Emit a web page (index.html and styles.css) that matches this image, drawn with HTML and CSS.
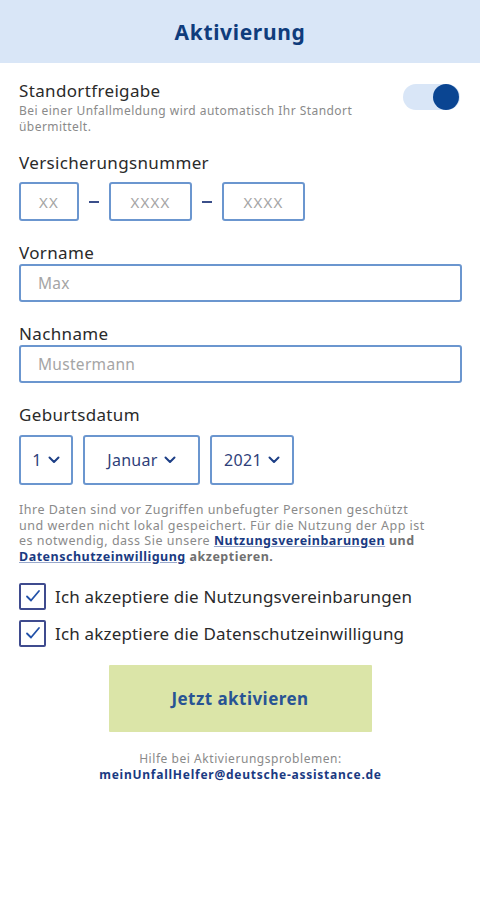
FILE: index.html
```html
<!DOCTYPE html>
<html lang="de">
<head>
<meta charset="utf-8">
<title>Aktivierung</title>
<link rel="stylesheet" href="styles.css">
</head>
<body>
<header class="appbar"><h1 class="appbar-title">Aktivierung</h1></header>
<main class="content">
  <section class="toggle-row">
    <div class="toggle-text">
      <div class="label">Standortfreigabe</div>
      <div class="hint">Bei einer Unfallmeldung wird automatisch Ihr Standort<br>übermittelt.</div>
    </div>
    <div class="switch"><span class="knob"></span></div>
  </section>

  <section class="field field-vn">
    <div class="label">Versicherungsnummer</div>
    <div class="vn-row">
      <div class="box box-xx">XX</div>
      <span class="dash"></span>
      <div class="box box-xxxx">XXXX</div>
      <span class="dash"></span>
      <div class="box box-xxxx">XXXX</div>
    </div>
  </section>

  <section class="field">
    <div class="label">Vorname</div>
    <div class="input">Max</div>
  </section>

  <section class="field">
    <div class="label">Nachname</div>
    <div class="input">Mustermann</div>
  </section>

  <section class="field">
    <div class="label">Geburtsdatum</div>
    <div class="date-row">
      <div class="select sel-day">1<svg class="chev" viewBox="0 0 12 8"><path d="M1.5 1.5 6 6l4.5-4.5"/></svg></div>
      <div class="select sel-month">Januar<svg class="chev" viewBox="0 0 12 8"><path d="M1.5 1.5 6 6l4.5-4.5"/></svg></div>
      <div class="select sel-year">2021<svg class="chev" viewBox="0 0 12 8"><path d="M1.5 1.5 6 6l4.5-4.5"/></svg></div>
    </div>
  </section>

  <p class="info">Ihre Daten sind vor Zugriffen unbefugter Personen geschützt<br>und werden nicht lokal gespeichert. Für die Nutzung der App ist<br>es notwendig, dass Sie unsere <a class="link">Nutzungsvereinbarungen</a> <b>und</b><br><a class="link">Datenschutzeinwilligung</a> <b>akzeptieren.</b></p>

  <div class="checks">
    <div class="check"><span class="cbox"><svg viewBox="0 0 20 20"><path d="M4 10.5 8 14.5 16 5"/></svg></span><span class="check-label">Ich akzeptiere die Nutzungsvereinbarungen</span></div>
    <div class="check"><span class="cbox"><svg viewBox="0 0 20 20"><path d="M4 10.5 8 14.5 16 5"/></svg></span><span class="check-label">Ich akzeptiere die Datenschutzeinwilligung</span></div>
  </div>

  <div class="btn-wrap"><button class="btn">Jetzt aktivieren</button></div>

  <div class="help">
    <div class="help-line">Hilfe bei Aktivierungsproblemen:</div>
    <div class="help-mail">meinUnfallHelfer@deutsche-assistance.de</div>
  </div>
</main>
</body>
</html>
```
FILE: styles.css
```css
* { box-sizing: border-box; }
html, body { margin: 0; padding: 0; background: #fff; }
body { font-family: "Noto Sans", "Open Sans", sans-serif; color: #222; width: 480px; }

.appbar { height: 63px; background: #d9e6f7; display: flex; align-items: center; justify-content: center; }
.appbar-title { margin: 0; font-size: 21px; font-weight: 700; color: #0f3c7c; letter-spacing: 0.65px; }

.content { padding: 18px 18px 0 19px; }

.label { font-size: 17px; line-height: 20px; color: #2a2a2a; letter-spacing: 0.35px; }

.toggle-row { display: flex; justify-content: space-between; align-items: flex-start; }
.hint { font-size: 12px; line-height: 15.5px; color: #8a8a8a; margin-top: 2px; letter-spacing: 0.45px; white-space: nowrap; }
.switch { width: 57px; height: 26px; border-radius: 13px; background: #d9e6f7; margin-top: 3px; margin-right: 2px; display: flex; align-items: center; justify-content: flex-end; padding-right: 1px; }
.knob { width: 26px; height: 26px; border-radius: 50%; background: #0a4592; }

.field { margin-top: 22px; }
.field-vn { margin-top: 19px; }

.vn-row { display: flex; align-items: center; margin-top: 9px; }
.box { height: 39px; border: 2px solid #6b96cf; border-radius: 3px; display: flex; align-items: center; justify-content: center; font-size: 15px; color: #a5a5a5; letter-spacing: 1.2px; }
.box-xx { width: 60px; }
.box-xxxx { width: 83px; }
.dash { width: 10px; height: 2px; background: #3b4f8a; margin: 0 10px; }

.input { height: 38px; border: 2px solid #6b96cf; border-radius: 3px; margin-top: 1px; display: flex; align-items: center; padding-left: 17px; font-size: 15.5px; color: #a5a5a5; letter-spacing: 0.3px; }

.date-row { display: flex; gap: 10px; margin-top: 10px; }
.select { height: 50px; border: 2px solid #6b96cf; border-radius: 3px; display: flex; align-items: center; justify-content: center; gap: 6px; font-size: 16px; color: #2f3f7a; letter-spacing: 0.3px; }
.sel-day { width: 54px; }
.sel-month { width: 117px; }
.sel-year { width: 84px; }
.chev { width: 12px; height: 8px; fill: none; stroke: #1d3f86; stroke-width: 2; stroke-linecap: round; stroke-linejoin: round; }

.info { margin: 17px 0 0; font-size: 12.5px; line-height: 15.7px; color: #8a8a8a; letter-spacing: 0.5px; white-space: nowrap; }
.info b { color: #707070; }
.link { color: #1a3a82; font-weight: 700; text-decoration: underline; text-decoration-color: #9aa9cc; text-underline-offset: 1px; }

.checks { margin-top: 18px; display: flex; flex-direction: column; gap: 10px; }
.check { display: flex; align-items: center; gap: 9px; }
.cbox { width: 27px; height: 27px; border: 2px solid #3f4b8e; border-radius: 2px; display: flex; align-items: center; justify-content: center; }
.cbox svg { width: 20px; height: 20px; fill: none; stroke: #2251a8; stroke-width: 1.8; stroke-linecap: round; stroke-linejoin: round; }
.check-label { font-size: 17px; color: #2a2a2a; letter-spacing: 0.17px; }

.btn-wrap { display: flex; justify-content: center; margin-top: 18px; padding-right: 1px; }
.btn { width: 263px; height: 67px; background: #dbe5a8; border: none; border-radius: 1px; font-family: inherit; font-size: 17px; font-weight: 700; color: #285494; letter-spacing: 0.45px; }

.help { text-align: center; margin-top: 19px; font-size: 12px; line-height: 16px; }
.help-line { color: #8a8a8a; letter-spacing: 0.55px; }
.help-mail { color: #1a3a82; font-weight: 700; letter-spacing: 0.75px; }
```
